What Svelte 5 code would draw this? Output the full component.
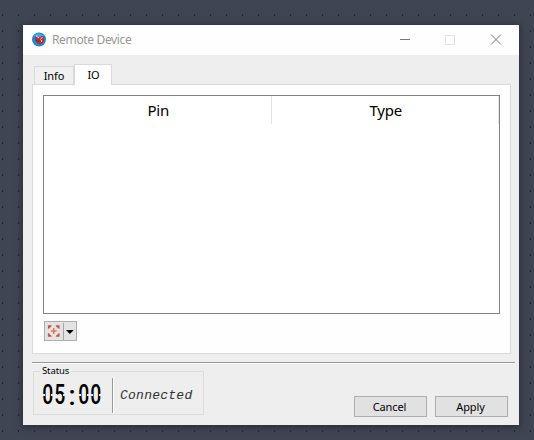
<script>
  const columns = ['Pin', 'Type'];
  const clock = '05:00'.split('');
</script>

<div class="desktop">
  <div class="window">
    <header>
      <svg class="logo" width="16" height="16" viewBox="0 0 16 16">
        <circle cx="8" cy="7.5" r="7" fill="#2385d1" />
        <path d="M2 4Q7-1 13 4L8 5Z" fill="#42aaf0" />
        <path d="M4 5L7 4 8 6 11 4 13 5V9L11 12 7 12 4 8Z" fill="#b83227" />
        <path d="M5 4l3 2M9.5 7.5l2-2.5M10.500 10V8" stroke="#e8d8db" stroke-width="1" />
        <path d="M5 8l3 2" stroke="#633741" stroke-width="1.5" />
      </svg>
      <span class="title">Remote Device</span>
      <svg class="controls" width="108" height="14" viewBox="0 0 108 14">
        <path d="M1 6.500h10" stroke="#777" fill="none" />
        <rect x="46.5" y="2.5" width="9" height="9" stroke="#e2e2e2" fill="none" />
        <path d="M92 1.500l10 10M102 1.500L92 11.500" stroke="#777" fill="none" />
      </svg>
    </header>
    <main>
      <div class="tabs">
        <div class="tab">Info</div>
        <div class="tab active">IO</div>
      </div>
      <section class="panel">
        <div class="table">
          {#each columns as column}
            <div class="column"><span>{column}</span></div>
          {/each}
        </div>
        <div class="tool">
          <svg width="19" height="18" viewBox="0 0 19 18">
            <path d="M3 7V3h4L6 5H5v1ZM11 3h4v4l-2-1V5h-1ZM3 11v4h4l-1-2H5v-1ZM11 15h4v-4l-2 1v1h-1Z" fill="#c5563b" />
            <path d="M9 6v6M6 9h6" stroke="#df745f" stroke-width="1.5" />
          </svg>
          <i></i>
          <svg width="12" height="18" viewBox="0 0 12 18"><path d="M2 8h8L6 12Z" fill="#000" /></svg>
        </div>
      </section>
    </main>
    <hr />
    <footer>
      <fieldset>
        <legend>Status</legend>
        <div class="clock">
          {#each clock as digit}
            <span class:colon={digit === ':'}><b>{digit}</b></span>
          {/each}
        </div>
        <div class="divider"></div>
        <span class="state">Connected</span>
      </fieldset>
      <div class="buttons">
        <button>Cancel</button>
        <button>Apply</button>
      </div>
    </footer>
  </div>
</div>

<style>
  * { box-sizing: border-box; }
  .desktop {
    width: 534px; height: 440px; padding: 25px 15px 15px 23px; overflow: hidden;
    background: radial-gradient(circle at 2.5px 15px, #222631 0 .6px, transparent 1.2px) 0 0 / 16px 16px, #404554;
    font: 11px "Noto Sans", sans-serif; color: #000;
  }
  .window { width: 496px; height: 400px; background: #eee; box-shadow: 0 1px 7px 1px #292b35; display: flex; flex-direction: column; }
  header { height: 30px; flex: none; background: #fefefe; display: flex; align-items: center; padding-left: 8px; }
  .logo { margin-right: 5px; }
  .title { font-size: 12px; color: #979797; width: 130px; letter-spacing: -.35px; white-space: nowrap; padding-bottom: 1px; }
  .controls { margin-left: 217px; }
  main { padding: 9px 8px 0 9px; }
  .tabs { height: 20px; display: flex; align-items: flex-end; padding-left: 2px; }
  .tab { height: 18px; width: 40px; border: 1px solid #d9d9d9; border-bottom: 0; text-align: center; line-height: 18px; background: #f0f0f0; letter-spacing: -.1px; }
  .tab.active { width: 38px; height: 21px; margin-bottom: -1px; background: #fefefe; z-index: 1; line-height: 20px; padding-left: 1px; }
  .panel { height: 270px; border: 1px solid #d9d9d9; background: #fefefe; padding: 10px 10px 0; }
  .table { width: 457px; height: 219px; border: 1px solid #828282; display: flex; background: #fff; }
  .column { height: 28px; flex: 1; border-right: 1px solid #e2e2e2; display: flex; justify-content: center; padding-left: 2px; font-size: 15px; line-height: 28px; letter-spacing: -.25px; }
  .tool { width: 33px; height: 20px; margin: 7px 0 0 1px; border: 1px solid #adadad; background: #e3e3e3; display: flex; align-items: center; }
  .tool i { width: 1px; height: 17px; background: #a5a5a5; }
  hr { width: 483px; height: 2px; margin: 8px 0 0 9px; border: 0; border-top: 1px solid #999; border-bottom: 1px solid #fff; flex: none; }
  footer { display: flex; justify-content: space-between; padding: 1px 11px 0 10px; }
  fieldset { margin: 0; padding: 0 0 0 8px; width: 171px; height: 50px; border: 1px solid #dcdcdc; min-width: 0; display: flex; align-items: flex-start; }
  legend { font-size: 9.5px; line-height: 12px; padding: 0 2px; margin-left: -2px; letter-spacing: -.1px; }
  .clock { display: flex; height: 28px; padding-top: 7px; width: 70px; }
  .clock span { width: 12px; height: 22px; position: relative; display: flex; justify-content: center; }
  .clock b { font: 500 27px/22px Roboto, sans-serif; transform: scaleX(.72); }
  .clock .colon b { transform: translateY(1px); }
  .clock span:not(.colon)::after { content: ''; position: absolute; top: 10px; left: 0; width: 3px; height: 2px; background: #eee; box-shadow: 9px 0 #eee; }
  .divider { width: 2px; height: 35px; margin-top: 1px; border-left: 1px solid #999; border-right: 1px solid #fff; }
  .state { font: italic 13px/37px "Liberation Mono", monospace; margin-left: 6px; letter-spacing: .25px; color: #333; }
  .buttons { display: flex; gap: 8px; padding-top: 31px; }
  button { width: 73px; height: 21px; padding: 0 2px 0 0; border: 1px solid #adadad; background: #e1e1e1; color: #000; font: 11px/19px "Noto Sans", sans-serif; letter-spacing: -.1px; }
</style>
